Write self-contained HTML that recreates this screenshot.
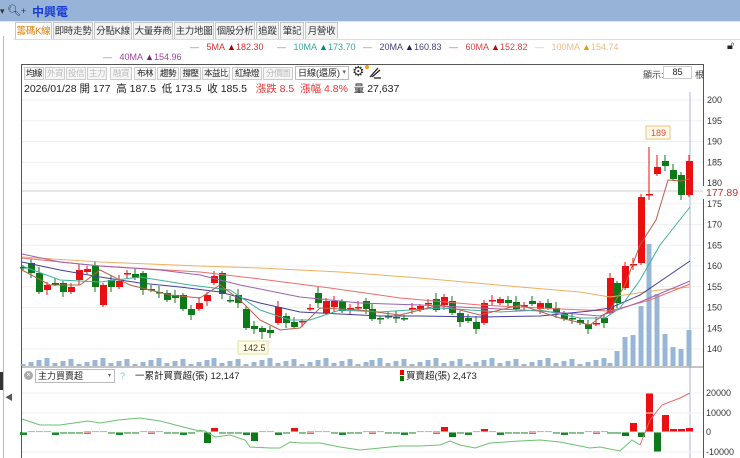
<!DOCTYPE html>
<html><head><meta charset="utf-8">
<style>
*{margin:0;padding:0;box-sizing:border-box}
body{width:740px;height:458px;overflow:hidden;background:#fff;font-family:"Liberation Sans","Noto Sans CJK TC",sans-serif;position:relative;font-size:11px;color:#222}
.a{position:absolute;white-space:nowrap}
.top{left:0;top:0;width:740px;height:21px;background:#97b3d7}
.tab{position:absolute;top:22px;height:18px;border:1px solid #c8c8c8;border-bottom:none;background:#f3f3f3;font-size:9.5px;line-height:17px;text-align:center;color:#333;white-space:nowrap;overflow:hidden;letter-spacing:-0.3px}
.btn{position:absolute;top:67px;height:13px;border:1px solid #ccc;background:#f6f6f6;font-size:8.5px;line-height:11px;text-align:center;color:#222;white-space:nowrap;overflow:hidden;letter-spacing:-0.5px}
.btn.d{color:#bbb}
.ma{font-size:9px;top:42px}
</style></head><body>
<div class="a top"></div>
<div class="a" style="left:0;top:4px;font-size:9px;color:#333">▾ <span style="font-size:11px">🔍︎</span>+</div>
<div class="a" style="left:32px;top:3px;font-size:12px;font-weight:bold;color:#1a3ad8">中興電</div>
<div class="a" style="left:0;top:21px;width:740px;height:1px;background:#e4e4e4"></div>
<div class="a" style="left:3px;top:36px;width:1px;height:422px;background:#bbb"></div>
<div class="a" style="left:0;top:372px;width:3px;height:18px;background:#333"></div>
<div class="a" style="left:5px;top:392px;font-size:8px;color:#555">◀</div>

<div class="tab" style="left:15px;width:37px;background:#fff;color:#e07a00">籌碼K線</div>
<div class="tab" style="left:53px;width:40px">即時走勢</div>
<div class="tab" style="left:94px;width:38px">分點K線</div>
<div class="tab" style="left:133px;width:40px">大量券商</div>
<div class="tab" style="left:174px;width:40px">主力地圖</div>
<div class="tab" style="left:215px;width:40px">個股分析</div>
<div class="tab" style="left:256px;width:23px">追蹤</div>
<div class="tab" style="left:280px;width:24px">筆記</div>
<div class="tab" style="left:305px;width:33px">月營收</div>
<div class="a" style="left:14px;top:39px;width:726px;height:1px;background:#ddd"></div>

<div class="a ma" style="left:190px;color:#c33"><span style="color:#888">—</span>&nbsp;&nbsp;&nbsp;5MA <span style="color:#a00">▲</span>182.30</div>
<div class="a ma" style="left:277px;color:#3a9"><span style="color:#888">—</span>&nbsp;&nbsp;&nbsp;10MA <span style="color:#087">▲</span>173.70</div>
<div class="a ma" style="left:363px;color:#447"><span style="color:#888">—</span>&nbsp;&nbsp;&nbsp;20MA <span style="color:#226">▲</span>160.83</div>
<div class="a ma" style="left:449px;color:#d44"><span style="color:#c66">—</span>&nbsp;&nbsp;&nbsp;60MA <span style="color:#c00">▲</span>152.82</div>
<div class="a ma" style="left:535px;color:#eb8"><span style="color:#eb8">—</span>&nbsp;&nbsp;&nbsp;100MA <span style="color:#e90">▲</span>154.74</div>
<div class="a ma" style="left:103px;top:52px;color:#949"><span style="color:#a7a">—</span>&nbsp;&nbsp;&nbsp;40MA <span style="color:#727">▲</span>154.96</div>
<div class="a" style="left:727px;top:40px;font-size:11px">🔓︎</div>

<div class="a" style="left:21px;top:64px;width:683px;height:394px;border-left:1px solid #555;border-top:1px solid #555;border-right:1px solid #555"></div>
<div class="btn" style="left:24px;width:20px">均線</div>
<div class="btn d" style="left:45px;width:20px">外資</div>
<div class="btn d" style="left:66px;width:20px">投信</div>
<div class="btn d" style="left:87px;width:20px">主力</div>
<div class="btn d" style="left:110px;width:22px">融資</div>
<div class="btn" style="left:134px;width:22px">布林</div>
<div class="btn" style="left:157px;width:22px">趨勢</div>
<div class="btn" style="left:180px;width:21px">撐壓</div>
<div class="btn" style="left:202px;width:28px">本益比</div>
<div class="btn" style="left:232px;width:30px">紅綠燈</div>
<div class="btn d" style="left:263px;width:30px">分價圖</div>
<div class="a" style="left:295px;top:66px;width:54px;height:14px;border:1px solid #bbb;font-size:9px;line-height:12px;padding-left:2px;overflow:hidden">日線(還原)<span style="position:absolute;right:2px;font-size:7px;color:#666">▾</span></div>
<div class="a" style="left:352px;top:63px;font-size:14px;color:#333">⚙</div>
<div class="a" style="left:365px;top:65px;width:4px;height:4px;border-radius:2px;background:#f90"></div>
<svg class="a" style="left:368px;top:65px" width="14" height="14"><path d="M2 12 L10 3 M4 12 L12 5 M6 13 H13" stroke="#222" stroke-width="1.3" fill="none"/></svg>
<div class="a" style="left:643px;top:68px;font-size:9px;color:#444">顯示:</div>
<div class="a" style="left:663px;top:66px;width:29px;height:13px;border:1px solid #ccc;font-size:9px;text-align:center;line-height:11px">85</div>
<div class="a" style="left:695px;top:68px;font-size:9px;color:#444">根</div>
<div class="a" style="left:24px;top:81px;font-size:10.5px">2026/01/28 開 177 &nbsp;高 187.5 &nbsp;低 173.5 &nbsp;收 185.5 &nbsp;&nbsp;<span style="color:#e33">漲跌 8.5 &nbsp;漲幅 4.8%</span> &nbsp;量 27,637</div>

<svg id="ch" class="a" style="left:0;top:0" width="740" height="458"></svg>

<div class="a" style="left:24px;top:371px;width:9px;height:9px;border-radius:5px;background:#aaa;color:#fff;font-size:7px;line-height:9px;text-align:center">×</div>
<div class="a" style="left:35px;top:369px;width:80px;height:14px;border:1px solid #bbb;font-size:9px;line-height:12px;padding-left:2px">主力買賣超<span style="position:absolute;right:3px;font-size:6px;color:#666">▾</span></div>
<div class="a" style="left:120px;top:371px;font-size:9px;color:#8bb">?</div>
<div class="a" style="left:135px;top:368px;font-size:9.5px">一累計買賣超(張) 12,147</div>
<div class="a" style="left:406px;top:368px;font-size:9.5px">買賣超(張) 2,473</div>
<div class="a" style="left:400px;top:370px;width:4px;height:5px;background:#e00"></div>
<div class="a" style="left:400px;top:376px;width:4px;height:5px;background:#070"></div>

<script>
var s='';
function Y(p){return 100+(200-p)*4.15}
for(var p=140;p<=200;p+=5){var y=Y(p);s+='<line x1="22" x2="703" y1="'+y+'" y2="'+y+'" stroke="#f0f0f0"/>';s+='<text x="707" y="'+(y+3)+'" font-size="9" fill="#333">'+p+'</text>';}
s+='<line x1="22" x2="703" y1="191" y2="191" stroke="#c8ccd6"/>';
s+='<rect x="703" y="186" width="37" height="13" fill="#fff"/><text x="706" y="196" font-size="10.5" fill="#b33">177.89</text>';
s+='<line x1="690" x2="690" y1="92" y2="458" stroke="#a9b8e0"/>';
s+='<line x1="22" x2="703" y1="367" y2="367" stroke="#888"/>';
var C=[[23,267,268,'g'],[31,263,273,'g'],[39,273,292,'g'],[47,285,290,'r'],[55,283,284,'g'],[63,283,292,'g'],[71,287,292,'r'],[79,270,280,'r'],[87,269,272,'r'],[95,266,287,'g'],[103,285,305,'r'],[111,280,287,'g'],[119,281,287,'r'],[127,273,274,'r'],[135,274,278,'g'],[143,273,290,'g'],[151,289,290,'g'],[159,292,293,'g'],[167,293,300,'g'],[175,295,298,'g'],[183,295,309,'g'],[191,309,315,'g'],[199,303,309,'r'],[207,295,301,'r'],[214,276,283,'r'],[222,273,294,'g'],[230,300,301,'g'],[238,295,303,'g'],[246,309,328,'g'],[254,326,329,'g'],[262,328,332,'g'],[270,330,333,'g'],[278,307,323,'r'],[286,316,323,'g'],[294,322,327,'g'],[302,321,322,'r'],[310,308,309,'r'],[318,293,303,'g'],[326,301,313,'r'],[334,301,307,'r'],[342,301,311,'g'],[350,308,309,'r'],[358,307,308,'r'],[366,301,309,'g'],[372,309,319,'g'],[380,318,319,'g'],[388,316,317,'g'],[396,317,318,'g'],[404,318,319,'g'],[412,308,309,'r'],[420,306,310,'r'],[428,303,304,'r'],[436,299,310,'g'],[444,297,305,'r'],[452,301,313,'g'],[460,313,322,'g'],[468,318,321,'g'],[476,322,329,'g'],[484,303,323,'r'],[492,300,301,'r'],[500,299,303,'r'],[508,300,303,'g'],[516,302,309,'g'],[524,305,306,'r'],[532,301,304,'g'],[540,303,309,'r'],[548,303,308,'g'],[556,308,313,'g'],[564,314,319,'g'],[572,318,319,'g'],[580,320,323,'g'],[588,324,329,'g'],[596,323,324,'r'],[604,318,323,'g'],[610,278,313,'r'],[617,283,303,'g'],[625,266,288,'r'],[633,264,265,'r'],[641,197,263,'r'],[649,194,195,'r'],[657,167,174,'r'],[665,161,166,'g'],[673,170,179,'g'],[681,175,195,'g'],[689,161,195,'r']];
var vol={204:333,212:342,241:352,313:352,320:350,609:331,617:351,625:337,633:335,641:306,649:244,657:294,665:334,673:347,681:349,689:330};
C.forEach(function(c,i){var col=c[3]=='r'?'#e81010':'#0d7a1a';var h=Math.max(c[2]-c[1],1.5);
 var wt=c[1]-2-(i*7%5),wb=c[2]+2+(i*3%6);if(i==79){wt=147}if(i==80||i==81){wt=155}if(i==84)wt=155;if(i==30)wb=339;
 s+='<line x1="'+c[0]+'" x2="'+c[0]+'" y1="'+wt+'" y2="'+wb+'" stroke="'+col+'"/>';
 s+='<rect x="'+(c[0]-3)+'" y="'+c[1]+'" width="7" height="'+h+'" fill="'+col+'"/>';
 var vt=vol[c[0]]||(366-(2+(i*37%7)));
 s+='<rect x="'+(c[0]-2.5)+'" y="'+vt+'" width="5" height="'+(366-vt)+'" fill="#98b6d6"/>';
 var b=(i*13%7)-3, bt,bh,bc;
 var sp={24:[428,4,'r'],23:[432,11,'g'],29:[432,9,'g'],34:[428,4,'r'],53:[427,5,'r'],54:[432,5,'g'],58:[429,3,'r'],76:[432,4,'g'],77:[423,9,'r'],78:[432,5,'g'],79:[393,39,'r'],80:[432,20,'g'],81:[415,17,'r'],82:[429,3,'r'],83:[429,3,'r'],84:[428,4,'r']};
 if(sp[i]){bt=sp[i][0];bh=sp[i][1];bc=sp[i][2]=='r'?'#e81010':'#0d7a1a'}else{bc=b>0?'#e86060':'#1a8a2a';bt=b>0?431:432;bh=(i%4==0)?3:1.5}
 s+='<rect x="'+(c[0]-3)+'" y="'+bt+'" width="7" height="'+bh+'" fill="'+bc+'"/>';
});
function pl(pts,col){s+='<polyline points="'+pts+'" fill="none" stroke="'+col+'" stroke-width="1"/>'}
pl('22,257 100,262 200,266 260,268 340,272 420,278 520,287 580,292 610,297 660,290 690,287','#eeb060');
pl('22,258 100,266 200,272 260,279 330,288 400,298 480,305 560,309 610,311 650,300 690,284','#ec6d6d');
pl('22,254 60,262 100,266 160,270 200,275 240,285 270,291 300,297 330,300 360,303 420,305 480,308 540,311 600,316 640,302 690,281','#a060b0');
pl('22,262 60,270 100,277 140,283 180,287 220,292 260,303 300,312 340,314 380,316 420,316 480,317 540,316 590,311 610,308 640,295 690,261','#40409a');
pl('22,266 60,280 100,282 140,277 190,285 230,290 260,310 290,320 310,320 340,310 380,312 440,308 500,312 540,310 580,318 605,318 620,308 640,280 660,245 690,207','#40b0a0');
pl('22,270 50,285 80,285 100,270 130,285 170,295 200,298 220,285 240,300 260,320 280,330 300,328 320,308 360,310 400,315 440,305 480,315 520,305 560,318 590,325 610,310 625,285 640,245 656,220 668,180 681,181 689,179','#b8604a');
s+='<rect x="238" y="341" width="30" height="13" fill="#fffbe0" stroke="#dde4a0"/><text x="243" y="351" font-size="9" fill="#444">142.5</text>';
s+='<rect x="646" y="126" width="24" height="13" fill="#fffbe8" stroke="#f0c080"/><text x="651" y="136" font-size="9" fill="#e44">189</text>';
[[20000,393],[10000,413],[0,432],[-10000,452]].forEach(function(a){s+='<line x1="22" x2="703" y1="'+a[1]+'" y2="'+a[1]+'" stroke="#f0f0f0"/><text x="706" y="'+(a[1]+3)+'" font-size="9" fill="#333">'+a[0]+'</text>'});
pl('22,419 40,425 60,425 88,421 100,423 118,420 140,418 160,421 195,430 205,431 215,437 230,435 245,440 250,447 270,448 280,448 290,442 300,443 320,443 340,447 360,450 380,448 400,446 420,446 440,445 450,441 460,445 475,448 490,443 520,441 540,440 560,442 590,448 600,447 620,451 632,440 640,445','#6cc070');
pl('640,445 650,420 662,405 680,398 690,393','#e66');
document.getElementById('ch').innerHTML=s;
</script>
</body></html>
